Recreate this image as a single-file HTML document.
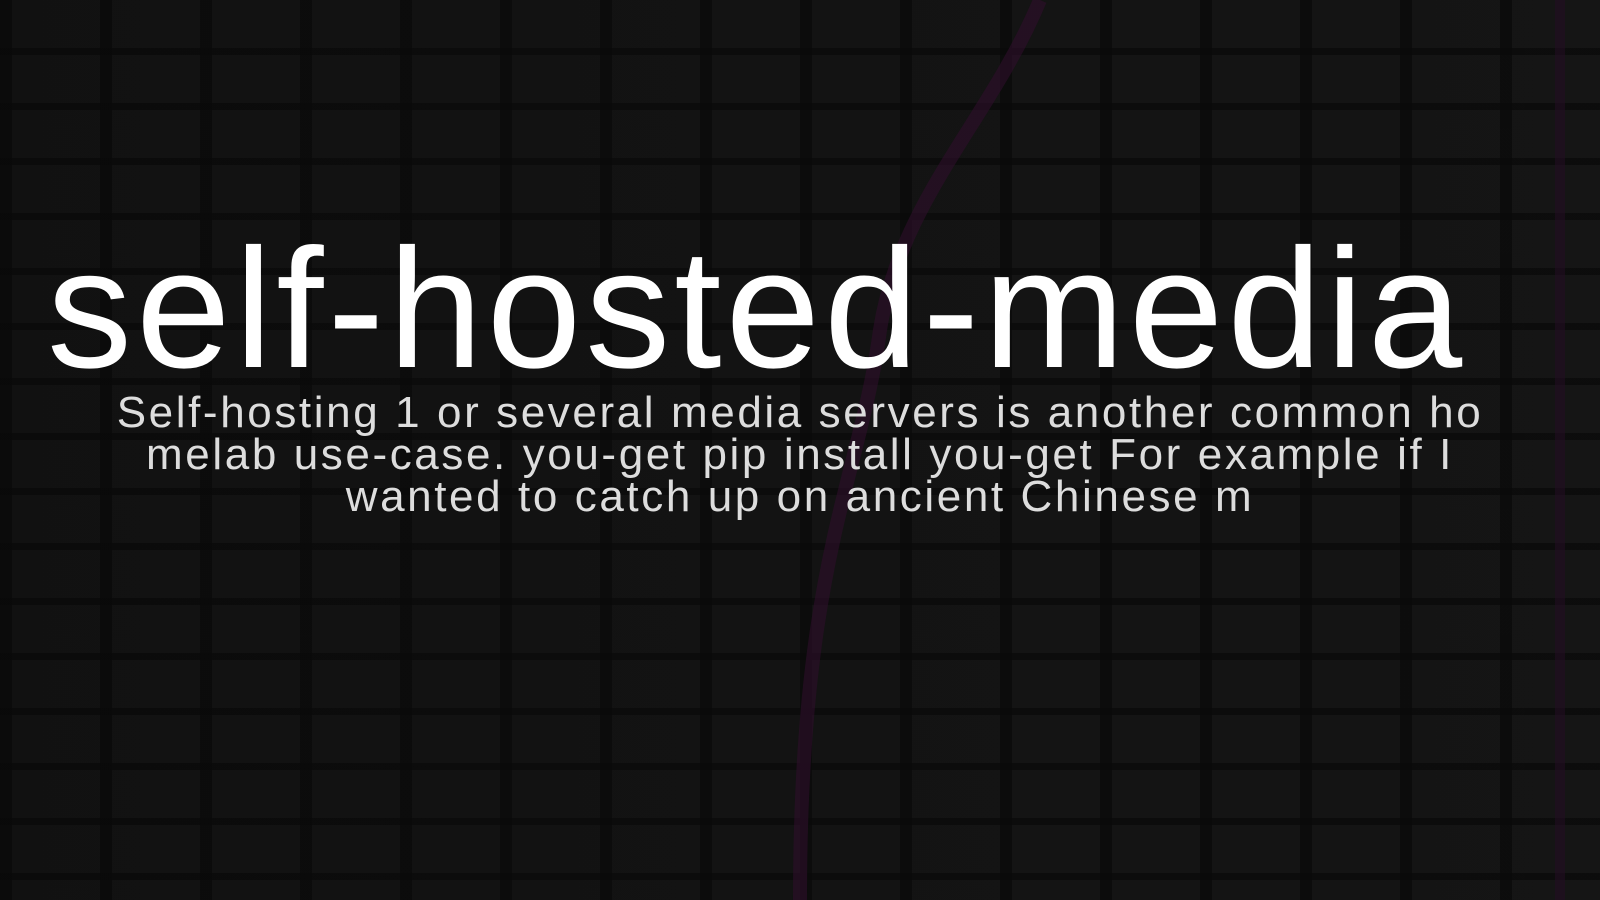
<!DOCTYPE html>
<html><head><meta charset="utf-8"><style>
html,body{margin:0;padding:0}
body{width:1600px;height:900px;overflow:hidden;position:relative;background:#151515;
background-image:
linear-gradient(90deg, rgba(8,8,8,0.7) 0 12px, transparent 12px 100px),
linear-gradient(0deg, rgba(8,8,8,0.7) 0 7px, transparent 7px 55px);
background-size:100px 55px,100px 55px;
font-family:"Liberation Sans",sans-serif}
.veil{position:absolute;inset:0;background:linear-gradient(90deg,rgba(10,10,10,0.35),rgba(20,20,20,0.1))}
svg{position:absolute;left:0;top:0}
h1{position:absolute;left:47px;width:1400px;top:209px;margin:0;text-align:center;color:#fff;font-weight:normal;font-size:170px;letter-spacing:4px;line-height:200px;white-space:nowrap}
p{position:absolute;left:0;width:1600px;top:392px;margin:0;text-align:center;color:#ddd;font-size:44px;line-height:42px;letter-spacing:2.6px;white-space:nowrap}
</style></head><body>
<div class="veil"></div>
<svg width="1600" height="900"><path d="M1040 0 C990 120 900 200 880 330 C860 480 800 560 800 900" stroke="#2e0f2c" stroke-width="14" fill="none" opacity="0.6"/><path d="M1560 0 L1560 900" stroke="#260d26" stroke-width="10" opacity="0.5"/></svg>
<h1>self-hosted-media</h1>
<p>Self-hosting 1 or several media servers is another common ho<br>melab use-case. you-get pip install you-get For example if I<br>wanted to catch up on ancient Chinese m</p>
</body></html>
